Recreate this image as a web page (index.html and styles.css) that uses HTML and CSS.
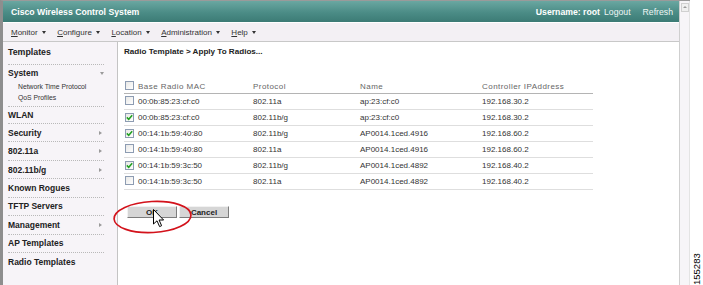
FILE: index.html
```html
<!DOCTYPE html>
<html lang="en">

<head>
    <meta charset="UTF-8">
    <title>Radio Template - Apply To Radios</title>
    <link rel="stylesheet" href="styles.css">
</head>

<body>
    <div class="page">
        <div class="frame">
            <div class="main">
                <div class="topbar">
                    <span class="product">Cisco Wireless Control System</span>
                    <span class="user">Username: root</span>
                    <a class="top-link logout">Logout</a>
                    <a class="top-link refresh">Refresh</a>
                </div>

                <div class="menubar">
                    <span class="menu-item"><u>M</u>onitor<i class="caret"></i></span>
                    <span class="menu-item"><u>C</u>onfigure<i class="caret"></i></span>
                    <span class="menu-item"><u>L</u>ocation<i class="caret"></i></span>
                    <span class="menu-item"><u>A</u>dministration<i class="caret"></i></span>
                    <span class="menu-item"><u>H</u>elp<i class="caret"></i></span>
                </div>

                <div class="body">
                    <div class="sidebar">
                        <div class="side-title">Templates</div>
                        <div class="side-group">
                            <div class="side-head">System<i class="arrow-down"></i></div>
                            <div class="side-sub">Network Time Protocol</div>
                            <div class="side-sub">QoS Profiles</div>
                        </div>
                        <div class="side-item short">WLAN</div>
                        <div class="side-item">Security<i class="arrow-right"></i></div>
                        <div class="side-item">802.11a<i class="arrow-right"></i></div>
                        <div class="side-item">802.11b/g<i class="arrow-right"></i></div>
                        <div class="side-item">Known Rogues</div>
                        <div class="side-item">TFTP Servers</div>
                        <div class="side-item">Management<i class="arrow-right"></i></div>
                        <div class="side-item">AP Templates</div>
                        <div class="side-item">Radio Templates</div>
                    </div>

                    <div class="content">
                        <div class="page-title">Radio Template &gt; Apply To Radios...</div>

                        <table class="radio-table">
                            <colgroup>
                                <col style="width:126px">
                                <col style="width:107px">
                                <col style="width:122px">
                                <col style="width:114px">
                            </colgroup>
                            <thead>
                                <tr>
                                    <th><span class="check"></span>Base Radio MAC</th>
                                    <th>Protocol</th>
                                    <th>Name</th>
                                    <th>Controller IPAddress</th>
                                </tr>
                            </thead>
                            <tbody id="radioRows"></tbody>
                        </table>

                        <div class="actions">
                            <button class="btn">OK</button>
                            <button class="btn">Cancel</button>
                            <svg class="callout" width="81" height="36" viewBox="0 0 81 36">
                                <ellipse cx="40.5" cy="18" rx="38.5" ry="15.5" fill="none" stroke="#d3121b" stroke-width="1.6" transform="rotate(-3 40.5 18)"/>
                            </svg>
                            <svg class="pointer" width="12" height="19" viewBox="0 0 12 19">
                                <path d="M0.5 0.5 L0.5 15 L4 11.8 L6.6 17.6 L8.6 16.7 L6.1 11 L10.6 11 Z" fill="#fff" stroke="#000" stroke-width="1" stroke-linejoin="round"/>
                            </svg>
                        </div>
                    </div>
                </div>
            </div>
            <div class="scrollbar"><span class="scroll-up"></span></div>
        </div>
        <div class="figure-no">155283</div>
    </div>

    <script>
        // Radios the template can be applied to
        var radios = [
            { mac: '00:0b:85:23:cf:c0', protocol: '802.11a', name: 'ap:23:cf:c0', ip: '192.168.30.2', checked: false },
            { mac: '00:0b:85:23:cf:c0', protocol: '802.11b/g', name: 'ap:23:cf:c0', ip: '192.168.30.2', checked: true },
            { mac: '00:14:1b:59:40:80', protocol: '802.11b/g', name: 'AP0014.1ced.4916', ip: '192.168.60.2', checked: true },
            { mac: '00:14:1b:59:40:80', protocol: '802.11a', name: 'AP0014.1ced.4916', ip: '192.168.60.2', checked: false },
            { mac: '00:14:1b:59:3c:50', protocol: '802.11b/g', name: 'AP0014.1ced.4892', ip: '192.168.40.2', checked: true },
            { mac: '00:14:1b:59:3c:50', protocol: '802.11a', name: 'AP0014.1ced.4892', ip: '192.168.40.2', checked: false }
        ];

        var tick = '<svg width="7" height="7" viewBox="0 0 7 7"><path d="M0.8 3.4 L2.7 5.3 L6.2 1.2" fill="none" stroke="#21a121" stroke-width="1.5"/></svg>';

        var rows = document.getElementById('radioRows');
        radios.forEach(function (radio) {
            var tr = document.createElement('tr');
            tr.innerHTML =
                '<td><span class="check">' + (radio.checked ? tick : '') + '</span>' + radio.mac + '</td>' +
                '<td>' + radio.protocol + '</td>' +
                '<td>' + radio.name + '</td>' +
                '<td>' + radio.ip + '</td>';
            rows.appendChild(tr);
        });
    </script>
</body>

</html>
```

FILE: styles.css
```css
body {
    margin: 0;
    background: #fff;
    font-family: "Liberation Sans", Arial, sans-serif;
    color: #333;
}

.page {
    display: flex;
    height: 285px;
    overflow: hidden;
}

.frame {
    display: flex;
    width: 690px;
    height: 285px;
    box-sizing: border-box;
    border-top: 1px solid #9a9a9a;
    border-left: 3px solid #8e8e8e;
}

.main {
    display: flex;
    flex-direction: column;
    width: 676px;
}

/* teal title bar */
.topbar {
    display: flex;
    align-items: center;
    height: 21px;
    padding: 0 6px 0 8px;
    background: linear-gradient(to bottom, #6aa7a1, #4b8c86 55%, #3c7b75);
    border-bottom: 1px solid #fff;
    color: #fff;
    font-size: 8.7px;
}

.product {
    font-weight: bold;
    flex: 1;
}

.user {
    font-weight: bold;
}

.top-link {
    color: #eef6f5;
}

.logout {
    margin-left: 4px;
}

.refresh {
    margin-left: 12px;
}

/* menu */
.menubar {
    display: flex;
    gap: 11.5px;
    height: 17px;
    padding: 1px 0 0 8px;
    background: #f3f0f4;
    border-bottom: 1px solid #c8c8c8;
    font-size: 8px;
    line-height: 17px;
    color: #333;
}

.menu-item {
    display: flex;
    align-items: center;
}

.caret {
    width: 0;
    height: 0;
    margin-left: 4px;
    border-left: 2.5px solid transparent;
    border-right: 2.5px solid transparent;
    border-top: 3px solid #333;
}

.body {
    display: flex;
    flex: 1;
}

/* left navigation */
.sidebar {
    width: 115px;
    box-sizing: border-box;
    padding: 0 13px 0 5px;
    background: #f7f4f8;
    border-right: 1px solid #c4c4c4;
    color: #222;
}

.side-title {
    height: 22px;
    line-height: 20px;
    font-size: 8.8px;
    font-weight: bold;
}

.side-group {
    border-top: 1px dotted #b9b9b9;
    padding-bottom: 3px;
}

.side-head {
    display: flex;
    justify-content: space-between;
    align-items: center;
    height: 16px;
    font-size: 8.5px;
    font-weight: bold;
}

.side-sub {
    padding-left: 10px;
    height: 11px;
    line-height: 11px;
    font-size: 6.8px;
    color: #333;
}

.side-item {
    display: flex;
    justify-content: space-between;
    align-items: center;
    height: 17.45px;
    border-top: 1px dotted #b9b9b9;
    font-size: 8.5px;
    font-weight: bold;
}

.side-item.short {
    height: 16px;
}

.arrow-down {
    width: 0;
    height: 0;
    border-left: 2.5px solid transparent;
    border-right: 2.5px solid transparent;
    border-top: 3px solid #9a9a9a;
}

.arrow-right {
    width: 0;
    height: 0;
    margin-right: 2px;
    border-top: 2.5px solid transparent;
    border-bottom: 2.5px solid transparent;
    border-left: 3px solid #9a9a9a;
}

/* main content */
.content {
    flex: 1;
    padding: 0 6px;
    background: #fff;
}

.page-title {
    height: 20px;
    line-height: 20px;
    font-size: 8.1px;
    font-weight: bold;
    color: #222;
}

.radio-table {
    margin-top: 16px;
    border-collapse: collapse;
    table-layout: fixed;
    width: 469px;
    font-size: 8px;
}

.radio-table th {
    padding: 2px 0 0 3px;
    line-height: 13px;
    text-align: left;
    font-weight: normal;
    letter-spacing: 0.45px;
    color: #666;
    border-bottom: 1px solid #b4b4b4;
}

.radio-table td {
    padding: 1px 0 0 3px;
    line-height: 14px;
    color: #333;
    border-bottom: 1px solid #dedede;
    white-space: nowrap;
}

.radio-table th:first-child,
.radio-table td:first-child {
    padding-left: 1px;
}

.check {
    display: inline-block;
    width: 9px;
    height: 9px;
    box-sizing: border-box;
    margin-right: 4px;
    vertical-align: -1px;
    border: 1px solid #8d9cb2;
    background: linear-gradient(135deg, #e8e8e6, #fff);
    line-height: 0;
}

.actions {
    position: relative;
    display: flex;
    gap: 2px;
    margin: 16px 0 0 3px;
}

.btn {
    width: 50px;
    height: 12px;
    padding: 0;
    box-sizing: border-box;
    background: #d6d6d6;
    border: 1px solid;
    border-color: #f2f2f2 #7c7c7c #7c7c7c #f2f2f2;
    font-family: "Liberation Sans", Arial, sans-serif;
    font-size: 8px;
    font-weight: bold;
    line-height: 9px;
    color: #222;
}

/* annotation drawn over the screenshot */
.callout {
    position: absolute;
    left: -15px;
    top: -7px;
}

.pointer {
    position: absolute;
    left: 26px;
    top: 3px;
}

.scrollbar {
    width: 11px;
    box-sizing: border-box;
    background: #f7f5f8;
    border-left: 1px solid #cfcfcf;
    border-right: 1px solid #e4e4e4;
    padding: 2px 0 0 1px;
}

.scroll-up {
    display: block;
    position: relative;
    width: 8px;
    height: 9px;
    box-sizing: border-box;
    border: 1px solid #d0d0d0;
    background: #f0f0f0;
}

.scroll-up::after {
    content: "";
    position: absolute;
    left: 1px;
    top: 2px;
    width: 0;
    height: 0;
    border-left: 2px solid transparent;
    border-right: 2px solid transparent;
    border-bottom: 2px solid #9a9a9a;
}

.figure-no {
    display: flex;
    align-items: center;
    justify-content: flex-start;
    flex: 1;
    padding-bottom: 3px;
    writing-mode: vertical-rl;
    transform: rotate(180deg);
    font-size: 9.5px;
    color: #000;
}
```
